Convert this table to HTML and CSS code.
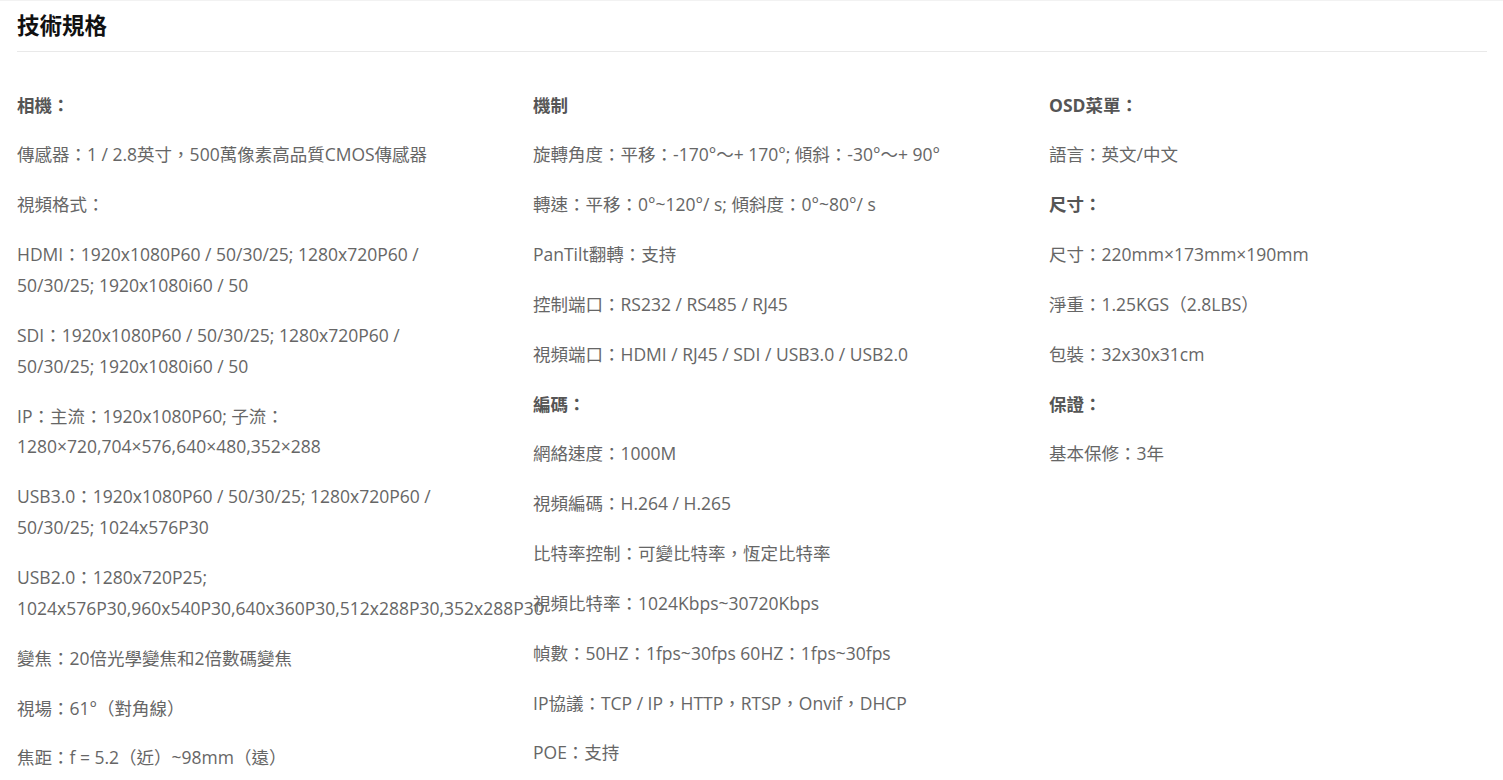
FILE: index.html
```html
<!DOCTYPE html>
<html lang="zh-Hant">
<head>
<meta charset="utf-8">
<title>技術規格</title>
<link rel="stylesheet" href="styles.css">
</head>
<body>
<section class="specs">
  <header class="specs-head">
    <h2 class="specs-title">技術規格</h2>
  </header>
  <div class="specs-grid">
    <div class="specs-col">
      <p class="label">相機：</p>
      <p>傳感器：1 / 2.8英寸，500萬像素高品質CMOS傳感器</p>
      <p>視頻格式：</p>
      <p>HDMI：1920x1080P60 / 50/30/25; 1280x720P60 / 50/30/25; 1920x1080i60 / 50</p>
      <p>SDI：1920x1080P60 / 50/30/25; 1280x720P60 / 50/30/25; 1920x1080i60 / 50</p>
      <p>IP：主流：1920x1080P60; 子流：1280×720,704×576,640×480,352×288</p>
      <p>USB3.0：1920x1080P60 / 50/30/25; 1280x720P60 / 50/30/25; 1024x576P30</p>
      <p>USB2.0：1280x720P25; 1024x576P30,960x540P30,640x360P30,512x288P30,352x288P30</p>
      <p>變焦：20倍光學變焦和2倍數碼變焦</p>
      <p>視場：61°（對角線）</p>
      <p>焦距：f = 5.2（近）~98mm（遠）</p>
    </div>
    <div class="specs-col">
      <p class="label">機制</p>
      <p>旋轉角度：平移：-170°～+ 170°; 傾斜：-30°～+ 90°</p>
      <p>轉速：平移：0°~120°/ s; 傾斜度：0°~80°/ s</p>
      <p>PanTilt翻轉：支持</p>
      <p>控制端口：RS232 / RS485 / RJ45</p>
      <p>視頻端口：HDMI / RJ45 / SDI / USB3.0 / USB2.0</p>
      <p class="label">編碼：</p>
      <p>網絡速度：1000M</p>
      <p>視頻編碼：H.264 / H.265</p>
      <p>比特率控制：可變比特率，恆定比特率</p>
      <p>視頻比特率：1024Kbps~30720Kbps</p>
      <p>幀數：50HZ：1fps~30fps 60HZ：1fps~30fps</p>
      <p>IP協議：TCP / IP，HTTP，RTSP，Onvif，DHCP</p>
      <p>POE：支持</p>
    </div>
    <div class="specs-col">
      <p class="label">OSD菜單：</p>
      <p>語言：英文/中文</p>
      <p class="label">尺寸：</p>
      <p>尺寸：220mm×173mm×190mm</p>
      <p>淨重：1.25KGS（2.8LBS）</p>
      <p>包裝：32x30x31cm</p>
      <p class="label">保證：</p>
      <p>基本保修：3年</p>
    </div>
  </div>
</section>
</body>
</html>
```

FILE: styles.css
```css
html, body {
  margin: 0;
  padding: 0;
  background: #ffffff;
  overflow: hidden;
}

body {
  font-family: "Open Sans", "Noto Sans CJK TC", sans-serif;
  color: #666666;
  font-size: 17.5px;
}

.specs {
  border-top: 1px solid #f2f2f2;
  padding: 0 16px 0 17px;
}

.specs-head {
  border-bottom: 1px solid #e9e9e9;
  height: 50px;
}

.specs-title {
  margin: 0;
  font-size: 22.5px;
  line-height: 50px;
  font-weight: 700;
  color: #111111;
}

.specs-grid {
  display: grid;
  grid-template-columns: 450px 450px 1fr;
  column-gap: 66px;
  padding-top: 37.5px;
}

.specs-col p {
  margin: 0 0 18.95px 0;
  line-height: 30.9px;
}

.specs-col p.label {
  font-weight: 700;
  color: #555555;
}
```
